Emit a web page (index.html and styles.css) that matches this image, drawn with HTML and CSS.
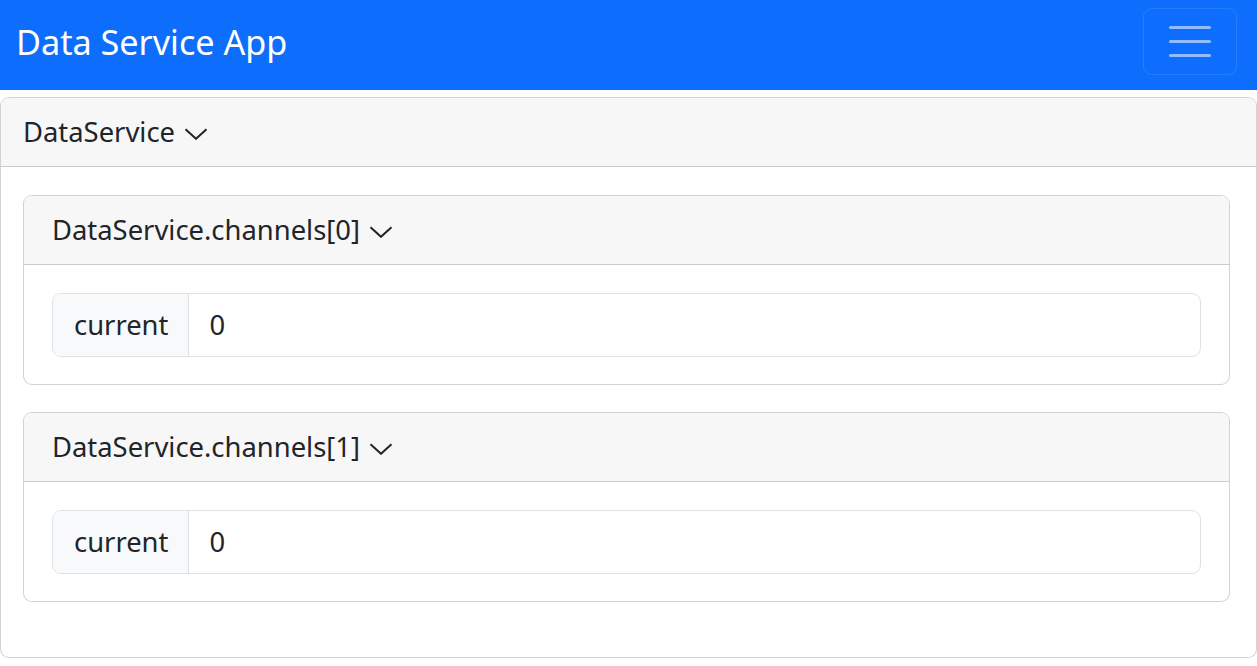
FILE: index.html
```html
<!DOCTYPE html>
<html lang="en">
<head>
<meta charset="utf-8">
<title>Data Service App</title>
<link rel="stylesheet" href="styles.css">
</head>
<body>
<nav class="navbar">
  <span class="brand">Data Service App</span>
  <button class="toggler" aria-label="Toggle navigation">
    <span class="bar"></span><span class="bar"></span><span class="bar"></span>
  </button>
</nav>
<main class="content">
  <section class="card outer">
    <header class="card-header outer-header">
      <span>DataService</span>
      <svg class="chev" viewBox="0 0 24 12" width="24" height="12"><path d="M1.5 1.2 L12 10.8 L22.5 1.2" fill="none" stroke="#212529" stroke-width="2"/></svg>
    </header>
    <div class="card-body">
      <section class="card inner">
        <header class="card-header">
          <span>DataService.channels[0]</span>
          <svg class="chev" viewBox="0 0 24 12" width="24" height="12"><path d="M1.5 1.2 L12 10.8 L22.5 1.2" fill="none" stroke="#212529" stroke-width="2"/></svg>
        </header>
        <div class="card-body">
          <div class="input-group">
            <span class="addon">current</span>
            <span class="field">0</span>
          </div>
        </div>
      </section>
      <section class="card inner">
        <header class="card-header">
          <span>DataService.channels[1]</span>
          <svg class="chev" viewBox="0 0 24 12" width="24" height="12"><path d="M1.5 1.2 L12 10.8 L22.5 1.2" fill="none" stroke="#212529" stroke-width="2"/></svg>
        </header>
        <div class="card-body">
          <div class="input-group">
            <span class="addon">current</span>
            <span class="field">0</span>
          </div>
        </div>
      </section>
    </div>
  </section>
</main>
</body>
</html>
```
FILE: styles.css
```css
* { box-sizing: border-box; }
html, body { margin: 0; padding: 0; }
body {
  font-family: "Noto Sans", "Open Sans", sans-serif;
  font-size: 27.4px;
  line-height: 1.5;
  color: #212529;
  background: #fff;
}
.navbar {
  height: 90px;
  background: #0d6efd;
  display: flex;
  align-items: flex-start;
  justify-content: space-between;
  padding: 8px 20px 0 16px;
}
.brand {
  color: #fff;
  font-size: 34.2px;
  line-height: 50px;
  margin-top: 9px;
}
.toggler {
  width: 94px;
  height: 67px;
  border: 1px solid rgba(255,255,255,.1);
  border-radius: 9px;
  background: transparent;
  display: flex;
  flex-direction: column;
  align-items: center;
  justify-content: center;
  gap: 11px;
  padding: 0;
}
.toggler .bar {
  display: block;
  width: 42px;
  height: 3px;
  border-radius: 2px;
  background: rgba(255,255,255,.55);
}
.content { padding-top: 7px; }
.card {
  border: 1px solid rgba(0,0,0,.175);
  border-radius: 9px;
  background: #fff;
  overflow: hidden;
}
.card-header {
  background: #f7f7f7;
  border-bottom: 1px solid rgba(0,0,0,.175);
  height: 69px;
  padding: 0 28px;
  display: flex;
  align-items: center;
  gap: 9px;
}
.outer-header { padding-left: 22px; }
.chev { display: block; margin-top: 4px; }
.outer { height: 561px; }
.outer > .card-body { padding: 28px 26px 28px 22px; }
.inner { margin-bottom: 27px; }
.inner > .card-body { padding: 28px 28px 27px; }
.input-group {
  display: flex;
  height: 64px;
  border: 1px solid #dee2e6;
  border-radius: 9px;
  overflow: hidden;
}
.addon {
  background: #f8f9fa;
  border-right: 1px solid #dee2e6;
  padding: 0 20px 0 21px;
  display: flex;
  align-items: center;
}
.field {
  flex: 1;
  display: flex;
  align-items: center;
  padding: 0 20px;
}
```
